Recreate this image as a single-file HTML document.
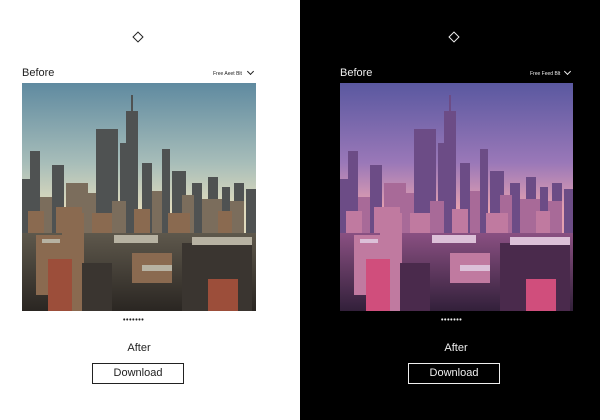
<!DOCTYPE html>
<html><head><meta charset="utf-8"><style>
*{margin:0;padding:0;box-sizing:border-box}
body{width:600px;height:420px;overflow:hidden;font-family:"Liberation Sans",sans-serif;position:relative;background:#fff}
.panel{position:absolute;top:0;width:300px;height:420px}
.l{left:0;background:#fff;color:#222}
.r{left:300px;background:#000;color:#eee}
.dia{position:absolute;left:134px;top:33px;width:8px;height:8px;border:1.2px solid currentColor;transform:rotate(45deg)}
.before{position:absolute;left:22px;top:67px;font-size:11px}
.sel{position:absolute;left:213px;top:71px;font-size:5px}
.chev{position:absolute;left:248px;top:69px;width:5px;height:5px;border-right:1.2px solid currentColor;border-bottom:1.2px solid currentColor;transform:rotate(45deg)}
.img{position:absolute;left:22px;top:83px;width:234px;height:228px;overflow:hidden}
.dots{position:absolute;left:123px;top:317px;font-size:7px;letter-spacing:0.6px;font-weight:bold}
.after{position:absolute;left:0;width:278px;text-align:center;top:342px;font-size:11px}
.btn{position:absolute;left:92px;top:363px;width:92px;height:21px;border:1px solid currentColor;text-align:center;line-height:19px;font-size:11px}
.L{--a:#4f5252;--b:#7b6d5c;--c:#8a6a50;--d:#9c4e3a;--e:#b7b2a2;--f:#3a3530;--g:url(#g1)}
.R{--a:#6c4c86;--b:#a86a98;--c:#c07aa0;--d:#d04e7c;--e:#dcc0d8;--f:#4a2a4c;--g:url(#g2)}
</style></head><body>
<svg width="0" height="0" style="position:absolute"><defs>
<linearGradient id="s1" x1="0" y1="0" x2="0" y2="1"><stop offset="0" stop-color="#5f8aa0"/><stop offset="0.35" stop-color="#a7bdb9"/><stop offset="0.55" stop-color="#e0dbbd"/></linearGradient>
<linearGradient id="s2" x1="0" y1="0" x2="0" y2="1"><stop offset="0" stop-color="#5a58a0"/><stop offset="0.35" stop-color="#9a78b8"/><stop offset="0.55" stop-color="#e4a0b0"/></linearGradient>
<linearGradient id="g1" x1="0" y1="0" x2="0" y2="1"><stop offset="0" stop-color="#5e584c"/><stop offset="1" stop-color="#2a2622"/></linearGradient>
<linearGradient id="g2" x1="0" y1="0" x2="0" y2="1"><stop offset="0" stop-color="#8a5082"/><stop offset="1" stop-color="#32203a"/></linearGradient>
<g id="city">
<g style="fill:var(--a)"><rect x="104" y="28" width="12" height="140"/><rect x="109" y="12" width="2" height="18"/><rect x="74" y="46" width="22" height="120"/><rect x="98" y="60" width="8" height="100"/><rect x="140" y="66" width="8" height="100"/><rect x="8" y="68" width="10" height="100"/><rect x="150" y="88" width="14" height="80"/><rect x="186" y="94" width="10" height="70"/><rect x="212" y="100" width="10" height="70"/><rect x="30" y="82" width="12" height="80"/><rect x="120" y="80" width="10" height="80"/><rect x="0" y="96" width="8" height="80"/><rect x="170" y="100" width="10" height="70"/><rect x="200" y="104" width="8" height="70"/><rect x="224" y="106" width="10" height="70"/></g>
<g style="fill:var(--b)"><rect x="44" y="100" width="22" height="70"/><rect x="18" y="114" width="12" height="60"/><rect x="60" y="110" width="14" height="60"/><rect x="130" y="108" width="10" height="60"/><rect x="160" y="112" width="12" height="60"/><rect x="180" y="116" width="20" height="60"/><rect x="208" y="118" width="14" height="60"/><rect x="90" y="118" width="14" height="60"/></g>
<g style="fill:var(--c)"><rect x="6" y="128" width="16" height="50"/><rect x="34" y="124" width="26" height="50"/><rect x="112" y="126" width="16" height="40"/><rect x="146" y="130" width="22" height="40"/><rect x="196" y="128" width="14" height="40"/><rect x="70" y="130" width="20" height="40"/></g>
<rect x="0" y="150" width="234" height="78" style="fill:var(--g)"/>
<g style="fill:var(--c)"><rect x="14" y="152" width="26" height="60"/><rect x="40" y="130" width="22" height="50"/><rect x="110" y="170" width="40" height="30"/><rect x="50" y="176" width="10" height="52"/></g>
<g style="fill:var(--f)"><rect x="60" y="180" width="30" height="48"/><rect x="160" y="160" width="70" height="68"/></g>
<g style="fill:var(--d)"><rect x="26" y="176" width="24" height="52"/><rect x="186" y="196" width="30" height="32"/></g>
<g style="fill:var(--e)"><rect x="92" y="152" width="44" height="8"/><rect x="170" y="154" width="60" height="8"/><rect x="120" y="182" width="30" height="6"/><rect x="20" y="156" width="18" height="4"/></g>
</g></defs></svg>
<div class="panel l">
<div class="dia"></div><div class="before">Before</div><div class="sel">Free Aeet Blt</div><div class="chev"></div>
<div class="img"><svg class="L" width="234" height="228"><rect width="234" height="228" fill="url(#s1)"/><use href="#city"/></svg></div>
<div class="dots">•••••••</div><div class="after">After</div><div class="btn">Download</div>
</div>
<div class="panel r">
<div class="dia" style="left:150px"></div><div class="before" style="left:40px">Before</div><div class="sel" style="left:230px">Free Feed Blt</div><div class="chev" style="left:265px"></div>
<div class="img" style="left:40px;width:233px"><svg class="R" width="234" height="228"><rect width="234" height="228" fill="url(#s2)"/><use href="#city"/></svg></div>
<div class="dots" style="left:141px">•••••••</div><div class="after" style="left:17px">After</div><div class="btn" style="left:108px">Download</div>
</div>
</body></html>
